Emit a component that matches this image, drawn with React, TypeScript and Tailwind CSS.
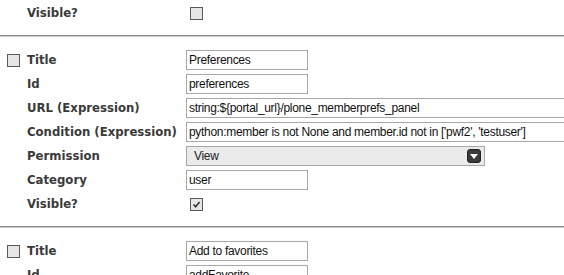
import React from 'react';

type Field = {
  label: string;
  kind: 'text' | 'wide' | 'select' | 'check';
  value?: string;
  checked?: boolean;
};

const labelFont = { fontFamily: '"DejaVu Sans Condensed", "DejaVu Sans", Verdana, sans-serif' };
const inputFont = { fontFamily: '"Liberation Sans", Arial, sans-serif' };

const CheckBox: React.FC<{ checked?: boolean }> = ({ checked }) => (
  <div className="w-[13px] h-[13px] shrink-0 border border-[#5a5a5a] bg-[#e6e6e6] flex items-center justify-center">
    {checked && (
      <svg width="9" height="9" viewBox="0 0 9 9">
        <path d="M1.5 4.5 L3.6 6.8 L7.6 2" fill="none" stroke="#333" strokeWidth="1.6" />
      </svg>
    )}
  </div>
);

const Control: React.FC<{ f: Field }> = ({ f }) => {
  if (f.kind === 'check') {
    return (
      <div className="pl-[4px] shrink-0">
        <CheckBox checked={f.checked} />
      </div>
    );
  }
  if (f.kind === 'select') {
    return (
      <div className="w-[299px] h-[20px] shrink-0 border border-[#a8a8a8] bg-[#ebebeb] flex items-center justify-between pl-[7px] pr-[3px]">
        <span className="text-[12px] tracking-[-0.3px] text-[#222]" style={inputFont}>{f.value}</span>
        <div className="w-[14px] h-[14px] rounded-[3px] bg-[#3a3a3a] border border-[#222] flex items-center justify-center">
          <svg width="8" height="5" viewBox="0 0 8 5">
            <path d="M0 0 L8 0 L4 5 Z" fill="#fff" />
          </svg>
        </div>
      </div>
    );
  }
  return (
    <div
      className={
        (f.kind === 'wide' ? 'w-[400px] border-r-0 ' : 'w-[122px] ') +
        'h-[20px] shrink-0 border border-[#a8a8a8] bg-white flex items-center pl-[2px] text-[12px] tracking-[-0.3px] text-[#111] whitespace-nowrap overflow-hidden'
      }
      style={inputFont}
    >
      {f.value}
    </div>
  );
};

const Group: React.FC<{ fields: Field[] }> = ({ fields }) => (
  <div className="flex flex-col">
    {fields.map((f, i) => (
      <div key={i} className="flex items-center h-[24px]">
        <div className="w-[27px] shrink-0 pl-[7px] flex items-center">
          {i === 0 && f.label === 'Title' && <CheckBox />}
        </div>
        <div className="w-[159px] shrink-0 text-[13px] font-bold text-[#3a3a3a] whitespace-nowrap" style={labelFont}>
          {f.label}
        </div>
        <Control f={f} />
      </div>
    ))}
  </div>
);

const Divider: React.FC = () => (
  <div className="h-[2px] border-t border-[#8a8a8a] bg-[#c8c8c8] mt-[10px] mb-[11px]" />
);

const App: React.FC = () => {
  return (
    <div className="w-[564px] h-[275px] overflow-hidden bg-white">
      <div className="pt-[1px]">
        <Group fields={[{ label: 'Visible?', kind: 'check' }]} />
      </div>
      <Divider />
      <Group
        fields={[
          { label: 'Title', kind: 'text', value: 'Preferences' },
          { label: 'Id', kind: 'text', value: 'preferences' },
          { label: 'URL (Expression)', kind: 'wide', value: 'string:${portal_url}/plone_memberprefs_panel' },
          { label: 'Condition (Expression)', kind: 'wide', value: "python:member is not None and member.id not in ['pwf2', 'testuser']" },
          { label: 'Permission', kind: 'select', value: 'View' },
          { label: 'Category', kind: 'text', value: 'user' },
          { label: 'Visible?', kind: 'check', checked: true },
        ]}
      />
      <Divider />
      <Group
        fields={[
          { label: 'Title', kind: 'text', value: 'Add to favorites' },
          { label: 'Id', kind: 'text', value: 'addFavorite' },
        ]}
      />
    </div>
  );
};

export default App;
